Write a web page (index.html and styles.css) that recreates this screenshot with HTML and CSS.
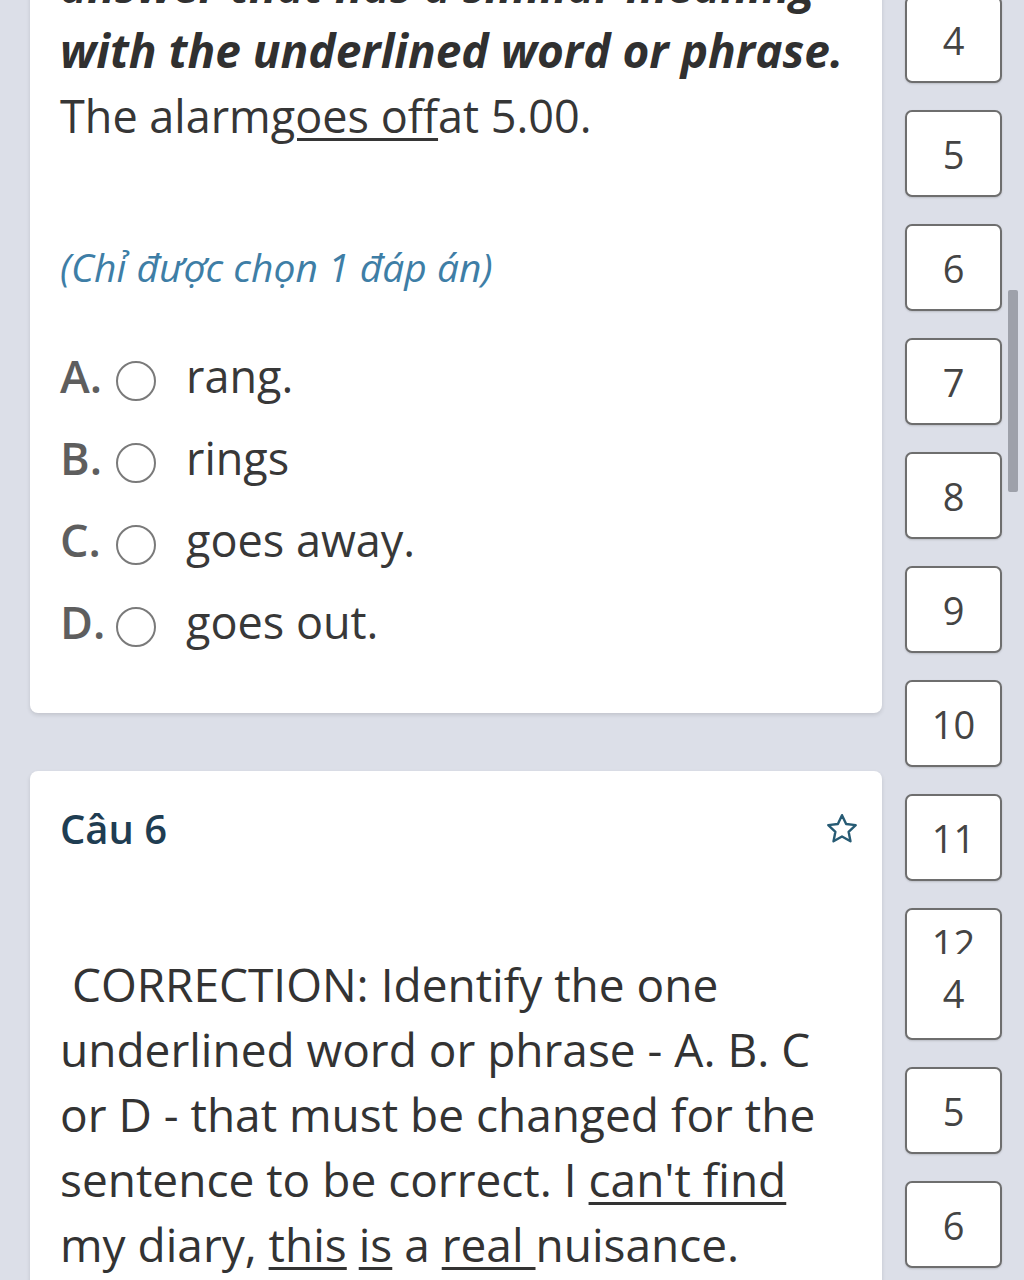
FILE: index.html
```html
<!DOCTYPE html>
<html lang="vi">
<head>
  <meta charset="UTF-8" />
  <meta name="viewport" content="width=device-width, initial-scale=1.0" />
  <title>Bài thi tiếng Anh</title>
  <link rel="stylesheet" href="styles.css">
</head>
<body>
  <div class="page">
    <!-- cột câu hỏi -->
    <div class="questions">
      <div class="card card-first">
        <p class="prompt">answer that has a similar meaning with the underlined word or phrase.</p>
        <p class="sentence">The alarm<u class="mark">goes off</u>at 5.00.</p>
        <p class="note">(Chỉ được chọn 1 đáp án)</p>
        <div class="options">
          <label class="option"><span class="letter">A.</span><span class="radio"></span><span class="answer">rang.</span></label>
          <label class="option"><span class="letter">B.</span><span class="radio"></span><span class="answer">rings</span></label>
          <label class="option"><span class="letter">C.</span><span class="radio"></span><span class="answer">goes away.</span></label>
          <label class="option"><span class="letter">D.</span><span class="radio"></span><span class="answer">goes out.</span></label>
        </div>
      </div>

      <div class="card card-second">
        <div class="card-head">
          <h2>Câu 6</h2>
          <svg class="star" width="36" height="36" viewBox="0 0 24 24" fill="none" stroke="#275b74" stroke-width="1.6" stroke-linejoin="round">
            <path d="M12 2.8l2.75 5.9 6.4.75-4.75 4.4 1.25 6.35L12 17.05 6.35 20.2 7.6 13.85 2.85 9.45l6.4-.75z"/>
          </svg>
        </div>
        <p class="body-text">&nbsp;CORRECTION: Identify the one underlined word or phrase - A. B. C or D - that must be changed for the sentence to be correct. I <u class="mark">can't find</u> my diary, <u class="mark">this</u> <u class="mark">is</u> a <u class="mark">real </u>nuisance.</p>
      </div>
    </div>

    <!-- cột số câu -->
    <div class="nav">
      <button class="num">4</button>
      <button class="num">5</button>
      <button class="num">6</button>
      <button class="num">7</button>
      <button class="num">8</button>
      <button class="num">9</button>
      <button class="num">10</button>
      <button class="num">11</button>
      <button class="num num-split"><span class="cut">12</span><span>4</span></button>
      <button class="num">5</button>
      <button class="num">6</button>
    </div>
  </div>
  <div class="scrollbar"></div>
</body>
</html>
```

FILE: styles.css
```css
/* giao diện làm bài */
body {
  margin: 0;
  background: #dcdfe8;
  font-family: 'Open Sans', 'Noto Sans', sans-serif;
  color: #353535;
  overflow: hidden;
}
.page {
  display: flex;
  margin-top: -60px;
}
.questions {
  width: 852px;
  margin-left: 30px;
  display: flex;
  flex-direction: column;
  gap: 58px;
}
.card {
  background: #fff;
  border-radius: 8px;
  box-shadow: 0 2px 4px rgba(0,0,0,0.12);
  padding: 0 22px 0 30px;
}
.card p {
  margin: 0;
}
.card-first {
  padding-top: 13px;
  padding-bottom: 51px;
}
.prompt {
  font-size: 46px;
  line-height: 65px;
  font-weight: 700;
  font-style: italic;
  color: #303030;
}
.sentence {
  font-size: 45px;
  line-height: 65px;
  color: #363636;
}
.mark {
  text-decoration-thickness: 3px;
  text-underline-offset: 5px;
}
.note {
  margin-top: 86px !important;
  font-size: 39px;
  line-height: 65px;
  font-style: italic;
  color: #3e7ea6;
}
.options {
  margin-top: 35px;
}
.option {
  display: flex;
  align-items: center;
  height: 82px;
  font-size: 45px;
}
.letter {
  width: 56px;
  font-weight: 600;
  color: #5e5e5e;
}
.radio {
  width: 36px;
  height: 36px;
  border: 2px solid #7a7a7a;
  border-radius: 50%;
  margin-top: 12px;
  margin-right: 30px;
}
.answer {
  color: #383838;
}
.card-second {
  padding-top: 30px;
  padding-bottom: 40px;
}
.card-head {
  display: flex;
  justify-content: space-between;
  align-items: center;
}
.card-head h2 {
  margin: 0;
  font-size: 40px;
  line-height: 56px;
  font-weight: 600;
  color: #1f3d52;
}
.star {
  margin-right: 0;
}
.body-text {
  margin-top: 95px !important;
  font-size: 46px;
  line-height: 65px;
  color: #333;
}
.nav {
  width: 97px;
  margin-left: 23px;
  padding-top: 56px;
  display: flex;
  flex-direction: column;
  gap: 27px;
}
.num {
  height: 87px;
  padding: 0;
  background: #fff;
  border: 2px solid #6e6e6e;
  border-radius: 7px;
  font-family: 'Open Sans', sans-serif;
  font-size: 38px;
  color: #444;
  box-shadow: 0 1px 2px rgba(0,0,0,0.15);
}
.num-split {
  height: 132px;
  display: flex;
  flex-direction: column;
  align-items: center;
  padding-top: 14px;
  line-height: 38px;
}
.num-split .cut {
  display: block;
  height: 30px;
  overflow: hidden;
  margin-bottom: 20px;
}
.scrollbar {
  position: absolute;
  left: 1008px;
  top: 290px;
  width: 10px;
  height: 202px;
  background: #9ea1aa;
  border-radius: 2px;
}
```
